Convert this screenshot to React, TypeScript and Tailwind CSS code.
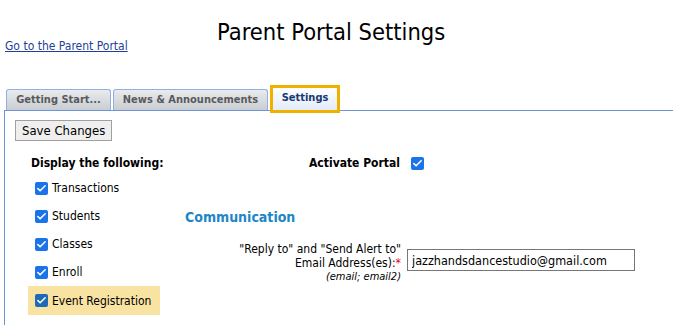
import { Check } from 'lucide-react';

const font = { fontFamily: "Tahoma, 'DejaVu Sans Condensed', 'Liberation Sans', sans-serif" };

function Box({ muted = false }: { muted?: boolean }) {
  return (
    <span
      className={`flex items-center justify-center w-[13px] h-[13px] rounded-[2px] ${
        muted ? 'bg-[#1d6ab8]' : 'bg-[#1a73e8]'
      }`}
    >
      <Check size={11} strokeWidth={3.5} className="text-white" />
    </span>
  );
}

const items = ['Transactions', 'Students', 'Classes', 'Enroll'];

export default function App() {
  return (
    <div className="w-[673px] h-[325px] bg-white text-black overflow-hidden text-[12px]" style={font}>
      {/* Header */}
      <div className="relative h-[86px]">
        <a href="#" className="absolute left-[5px] top-[37px] text-[12px] text-[#1f3f99] underline">
          Go to the Parent Portal
        </a>
        <h1 className="absolute left-[217px] top-[17px] text-[23.5px] leading-[30px] font-normal">
          Parent Portal Settings
        </h1>
      </div>

      {/* Tabs */}
      <div className="flex items-end pl-[2px] h-[25px] border-b border-[#6a96d8] ml-[4px] -mb-px relative">
        <div className="h-[21px] w-[105px] mr-[2px] flex items-center justify-center border border-b-0 border-[#8fb0e0] rounded-t-[3px] bg-gradient-to-b from-[#e9ebee] to-[#c9cdd2] text-[#5a5a5a] font-bold text-[11px]">
          Getting Start...
        </div>
        <div className="h-[21px] w-[155px] mr-[2px] flex items-center justify-center border border-b-0 border-[#8fb0e0] rounded-t-[3px] bg-gradient-to-b from-[#e9ebee] to-[#c9cdd2] text-[#5a5a5a] font-bold text-[11px]">
          News &amp; Announcements
        </div>
        <div className="h-[28px] w-[70px] -mb-[3px] border-[3px] border-[#f0b000] bg-white">
          <div className="h-full flex items-center justify-center bg-gradient-to-b from-white to-[#e3ecfa] text-[#173a72] font-bold text-[11px] pb-[2px]">
            Settings
          </div>
        </div>
      </div>

      {/* Panel */}
      <div className="ml-[4px] border-l border-[#6a96d8] h-[220px] pt-[10px] pl-[10px] relative">
        <button className="h-[21px] px-[6px] border border-[#a0a0a0] bg-[#efefef] text-[13px] leading-none">
          Save Changes
        </button>

        <div className="flex mt-[12px]">
          {/* Left column */}
          <div className="w-[170px] flex flex-col">
            <div className="pl-[16px] h-[20px] flex items-center font-bold text-[12px]">Display the following:</div>
            <div className="flex flex-col pt-[1px]">
              {items.map((t) => (
                <label key={t} className="h-[28px] flex items-center gap-[4px] pl-[20px]">
                  <Box />
                  <span>{t}</span>
                </label>
              ))}
              <label className="h-[29px] w-[132px] ml-[13px] flex items-center gap-[4px] pl-[7px] bg-[#f9e3a3]">
                <Box muted />
                <span>Event Registration</span>
              </label>
            </div>
          </div>

          {/* Right column */}
          <div className="flex flex-col">
            <div className="flex items-center h-[20px]">
              <span className="w-[215px] text-right font-bold">Activate Portal</span>
              <span className="ml-[11px]">
                <Box />
              </span>
            </div>
            <div className="mt-[34px] text-[14px] font-bold text-[#1e86c6] h-[20px] leading-[20px]">
              Communication
            </div>
            <div className="flex items-start mt-[15px]">
              <div className="w-[216px] text-right leading-[14px]">
                <div>"Reply to" and "Send Alert to"</div>
                <div>
                  Email Address(es):<span className="text-[#e0002a]">*</span>
                </div>
                <div className="italic text-[11px]">(email; email2)</div>
              </div>
              <input
                readOnly
                value="jazzhandsdancestudio@gmail.com"
                className="ml-[6px] mt-[7px] w-[228px] h-[22px] border border-[#767676] px-[4px] text-[12.5px] outline-none"
                style={font}
              />
            </div>
          </div>
        </div>
      </div>
    </div>
  );
}
